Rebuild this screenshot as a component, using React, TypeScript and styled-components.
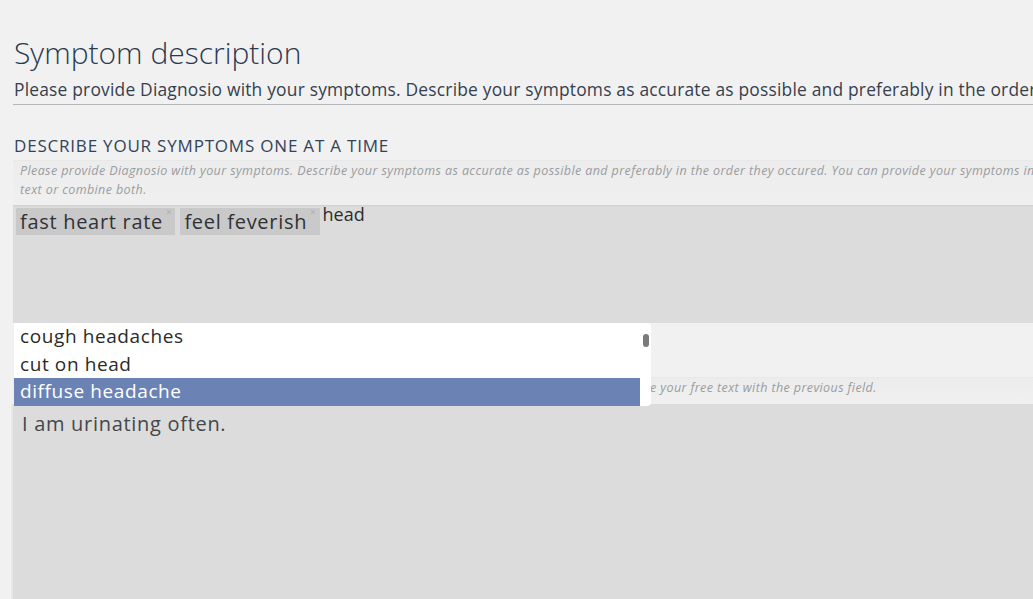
import React from 'react'
import styled, { createGlobalStyle } from 'styled-components'

const GlobalStyle = createGlobalStyle`
	html, body {
		margin: 0;
		padding: 0;
		background: #f1f1f1;
		overflow: hidden;
	}
	body {
		font-family: 'Open Sans', 'DejaVu Sans', sans-serif;
	}
`

const Page = styled.div`
	width: 1240px;
	height: 599px;
	padding: 0 0 0 13px;
	box-sizing: border-box;
	overflow: hidden;
`

const Title = styled.h1`
	margin: 34px 0 0 1px;
	font-size: 30px;
	font-weight: 300;
	line-height: 38px;
	color: #2b3950;
`

const Lead = styled.p`
	margin: 5px 0 0;
	padding: 0 0 3px 1px;
	font-size: 17.4px;
	line-height: 24px;
	letter-spacing: 0.2px;
	white-space: nowrap;
	color: #363f4e;
	border-bottom: 1px solid #b4b6ba;
`

const Section = styled.section`
	position: relative;
	display: flex;
	flex-direction: column;
`

const SectionHeading = styled.h2<{ $top: number; $bottom: number }>`
	margin: ${({ $top }) => $top}px 0 ${({ $bottom }) => $bottom}px 1px;
	font-size: 17px;
	font-weight: 400;
	line-height: 22px;
	letter-spacing: 0.8px;
	color: #34435a;
	text-transform: uppercase;
`

const Hint = styled.div<{ $height: number }>`
	height: ${({ $height }) => $height}px;
	padding: 0 7px;
	box-sizing: border-box;
	background: linear-gradient(#ececec, #f0f0f0);
	border-top: 1px solid #e8e8e8;
	font-size: 12.5px;
	font-style: italic;
	line-height: 19px;
	letter-spacing: 0.4px;
	white-space: nowrap;
	color: #9a9ca0;
`

const TagField = styled.div`
	height: 118px;
	padding: 3px;
	box-sizing: border-box;
	background: #dcdcdc;
	box-shadow: inset 0 1px 1px #cfcfcf;
	display: flex;
	align-items: flex-start;
	gap: 5px;
`

const Tag = styled.span`
	display: inline-flex;
	align-items: flex-start;
	height: 27px;
	padding: 0 3px 0 4px;
	background: #c9c9c9;
	font-size: 20px;
	line-height: 27px;
	letter-spacing: 0.7px;
	color: #303236;
`

const TagRemove = styled.span`
	margin: -6px 0 0 3px;
	font-size: 10px;
	line-height: 20px;
	color: #aeb0b3;
`

const TypedText = styled.span`
	margin: -6px 0 0 -2px;
	font-size: 18px;
	line-height: 24px;
	color: #2c2c2c;
`

const FreeText = styled.div`
	height: 210px;
	padding: 6px 9px;
	box-sizing: border-box;
	background: #dcdcdc;
	box-shadow: -2px 0 0 #e8e8e8;
	font-size: 20px;
	line-height: 28px;
	letter-spacing: 0.7px;
	color: #45474b;
`

const Suggestions = styled.ul`
	position: absolute;
	left: 1px;
	top: 0;
	width: 637px;
	margin: 0;
	padding: 0 11px 0 0;
	box-sizing: border-box;
	list-style: none;
	background: #ffffff;
	border-radius: 0 4px 4px 0;
	z-index: 2;
`

const Suggestion = styled.li<{ $active?: boolean }>`
	height: 27.5px;
	padding: 0 6px;
	font-size: 19px;
	line-height: 26px;
	letter-spacing: 0.6px;
	color: ${({ $active }) => ($active ? '#ffffff' : '#2a2a2a')};
	background: ${({ $active }) => ($active ? '#6b83b4' : 'transparent')};
`

const ScrollThumb = styled.span`
	position: absolute;
	right: 2px;
	top: 11px;
	width: 6px;
	height: 13px;
	border-radius: 3px;
	background: #7a7a7a;
`

const tags = ['fast heart rate', 'feel feverish']
const suggestions = ['cough headaches', 'cut on head', 'diffuse headache']

export default function App() {
	return (
		<>
			<GlobalStyle />
			<Page>
				<Title>Symptom description</Title>
				<Lead>
					Please provide Diagnosio with your symptoms. Describe your symptoms as accurate as possible
					and preferably in the order they occured.
				</Lead>

				<Section>
					<SectionHeading $top={30} $bottom={3}>
						Describe your symptoms one at a time
					</SectionHeading>
					<Hint $height={45}>
						Please provide Diagnosio with your symptoms. Describe your symptoms as accurate as possible
						and preferably in the order they occured. You can provide your symptoms in this field,
						<br />
						text or combine both.
					</Hint>
					<TagField>
						{tags.map((t) => (
							<Tag key={t}>
								{t}
								<TagRemove>×</TagRemove>
							</Tag>
						))}
						<TypedText>head</TypedText>
					</TagField>
				</Section>

				<Section>
					<Suggestions>
						{suggestions.map((s, i) => (
							<Suggestion key={s} $active={i === 2}>
								{s}
							</Suggestion>
						))}
						<ScrollThumb />
					</Suggestions>
					<SectionHeading $top={16} $bottom={16}>
						Or describe your symptoms in free text
					</SectionHeading>
					<Hint $height={27}>
						Describe your symptoms in your own words, as detailed as you can. You may use this field
						alone or combine your free text with the previous field.
					</Hint>
					<FreeText>I am urinating often.</FreeText>
				</Section>
			</Page>
		</>
	)
}
